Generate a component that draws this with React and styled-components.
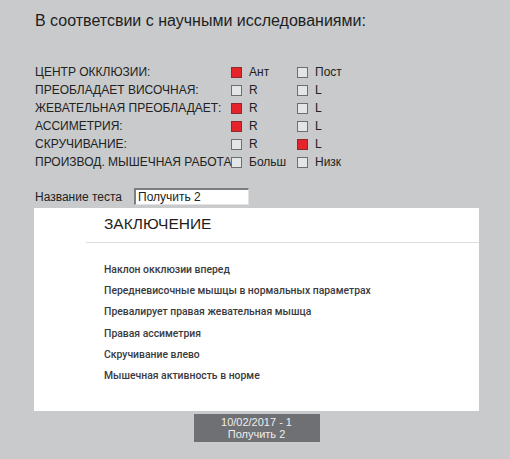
import React from 'react';
import styled, { createGlobalStyle } from 'styled-components';

const GlobalStyle = createGlobalStyle`
  html, body {
    margin: 0;
    padding: 0;
    background: #c8cacc;
  }
  body {
    font-family: "Liberation Sans", Arial, sans-serif;
    color: #222;
  }
`;

const Page = styled.div`
  width: 510px;
  height: 459px;
  padding-left: 34px;
  box-sizing: border-box;
  overflow: hidden;
  display: flex;
  flex-direction: column;
`;

const Title = styled.div`
  margin-top: 11px;
  padding-left: 1px;
  font-size: 16px;
  line-height: 20px;
  color: #1e1e1e;
`;

const Criteria = styled.div`
  margin-top: 32px;
  padding-left: 1px;
  display: grid;
  grid-template-columns: 196px 66px 80px;
  grid-auto-rows: 18px;
  font-size: 12px;
  line-height: 18px;
`;

const Label = styled.div`
  white-space: nowrap;
  text-transform: uppercase;
`;

const Option = styled.div`
  display: flex;
  align-items: center;
  gap: 7px;
  white-space: nowrap;
`;

const Box = styled.span`
  width: 11px;
  height: 11px;
  box-sizing: border-box;
  flex: none;
  background: ${p => (p.$on ? '#e5232a' : '#e4e5e6')};
  border: 1px solid ${p => (p.$on ? '#8e2a2c' : '#6d6e70')};
`;

const NameRow = styled.div`
  margin-top: 17px;
  padding-left: 1px;
  display: flex;
  align-items: center;
  gap: 12px;
  font-size: 12px;
`;

const NameInput = styled.div`
  width: 115px;
  height: 17px;
  box-sizing: border-box;
  background: #fff;
  border-style: solid;
  border-width: 2px 1px 1px 2px;
  border-color: #7c7d7f #e2e2e2 #e2e2e2 #7c7d7f;
  padding-left: 2px;
  font-size: 12px;
  line-height: 14px;
  color: #222;
`;

const Panel = styled.div`
  margin-top: 3px;
  width: 445px;
  height: 203px;
  background: #fff;
  padding-top: 6px;
  box-sizing: border-box;
`;

const Heading = styled.div`
  padding-left: 70px;
  font-size: 15.5px;
  line-height: 20px;
  color: #1e1e1e;
`;

const Divider = styled.div`
  margin: 8px 0 0 52px;
  height: 1px;
  background: #dcdddf;
`;

const Findings = styled.ul`
  list-style: none;
  margin: 16px 0 0;
  padding: 0 0 0 70px;
  font-family: Roboto, "Noto Sans", sans-serif;
  font-size: 10.4px;
  font-weight: 500;
  line-height: 21.2px;
  color: #3a3a3e;
`;

const Footer = styled.div`
  width: 445px;
  display: flex;
  justify-content: center;
  margin-top: 3px;
`;

const TestButton = styled.div`
  width: 126px;
  height: 28px;
  background: #6f7073;
  color: #eeeeee;
  font-size: 11px;
  line-height: 12px;
  display: flex;
  flex-direction: column;
  align-items: center;
  justify-content: center;
`;

const criteria = [
  { label: 'Центр окклюзии:', a: 'Ант', b: 'Пост', on: 'a' },
  { label: 'Преобладает височная:', a: 'R', b: 'L', on: null },
  { label: 'Жевательная преобладает:', a: 'R', b: 'L', on: 'a' },
  { label: 'Ассиметрия:', a: 'R', b: 'L', on: 'a' },
  { label: 'Скручивание:', a: 'R', b: 'L', on: 'b' },
  { label: 'Производ. мышечная работа', a: 'Больш', b: 'Низк', on: null },
];

const findings = [
  'Наклон окклюзии вперед',
  'Передневисочные мышцы в нормальных параметрах',
  'Превалирует правая жевательная мышца',
  'Правая ассиметрия',
  'Скручивание влево',
  'Мышечная активность в норме',
];

export default function App() {
  return (
    <>
      <GlobalStyle />
      <Page>
        <Title>В соответсвии с научными исследованиями:</Title>

        <Criteria>
          {criteria.map(row => (
            <React.Fragment key={row.label}>
              <Label>{row.label}</Label>
              <Option>
                <Box $on={row.on === 'a'} />
                {row.a}
              </Option>
              <Option>
                <Box $on={row.on === 'b'} />
                {row.b}
              </Option>
            </React.Fragment>
          ))}
        </Criteria>

        <NameRow>
          Название теста
          <NameInput>Получить 2</NameInput>
        </NameRow>

        <Panel>
          <Heading>ЗАКЛЮЧЕНИЕ</Heading>
          <Divider />
          <Findings>
            {findings.map(f => (
              <li key={f}>{f}</li>
            ))}
          </Findings>
        </Panel>

        <Footer>
          <TestButton>
            <span>10/02/2017 - 1</span>
            <span>Получить 2</span>
          </TestButton>
        </Footer>
      </Page>
    </>
  );
}
